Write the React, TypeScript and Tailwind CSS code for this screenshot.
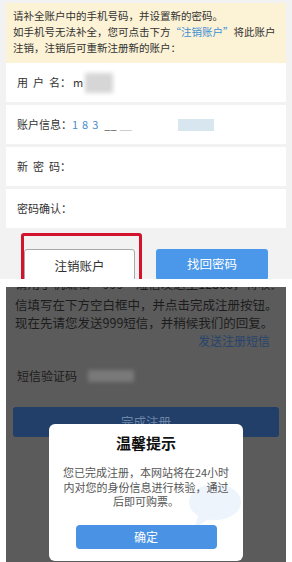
import React from "react";

const rowCls = "mx-[6px] h-[39px] bg-white flex items-center pl-[11px] text-[11px] text-[#333]";

export default function App() {
  return (
    <div className="w-[292px] h-[562px] overflow-hidden bg-white font-['Noto_Sans_CJK_SC','Noto_Sans',sans-serif]">
      {/* top: account form */}
      <div className="h-[279px] overflow-hidden bg-[#f2f2f2] pt-[3px]">
        <div className="mx-[6px] h-[60px] bg-[#fcf2d5] px-[7px] pt-[5px] text-[10.5px] leading-[16px] text-[#333]">
          <p>请补全账户中的手机号码，并设置新的密码。</p>
          <p className="whitespace-nowrap">
            如手机号无法补全，您可点击下方<span className="text-[#3d8fd8]">“注销账户”</span>将此账户
          </p>
          <p>注销，注销后可重新注册新的账户：</p>
        </div>

        <div className="flex flex-col gap-[3px]">
          <div className={rowCls}>
            <span className="tracking-[5px]">用户</span>
            <span>名：</span>
            <span className="ml-[2px]">m</span>
            <span className="ml-[2px] h-[20px] w-[28px] bg-[#d6d6d6] blur-[2px]" />
          </div>
          <div className={rowCls}>
            <span>账户信息：</span>
            <span className="text-[#4a8cc9] tracking-[4px]">183</span>
            <span className="ml-[2px] text-[#555]">__</span>
            <span className="ml-[3px] text-[#bbb]">__</span>
            <span className="ml-[46px] h-[12px] w-[36px] bg-[#d8e6f0]" />
          </div>
          <div className={rowCls}>
            <span className="tracking-[5px]">新密</span>
            <span>码：</span>
          </div>
          <div className={rowCls}>
            <span>密码确认：</span>
          </div>
        </div>

        <div className="mt-[5px] flex items-start">
          <div className="ml-[21px] w-[121px] rounded-[3px] border-[3px] border-[#d3122c] pt-[13px] pr-[4px]">
            <button className="h-[34px] w-full rounded-[3px] border border-[#a9a9a9] bg-white text-[12.5px] text-[#333]">
              注销账户
            </button>
          </div>
          <button className="ml-[14px] mt-[16px] h-[31px] w-[112px] rounded-[3px] bg-[#4b98ea] text-[12.5px] text-white">
            找回密码
          </button>
        </div>
      </div>

      {/* bottom: sms registration with dialog */}
      <div className="mt-[8px] relative mx-[6px] h-[275px] overflow-hidden bg-[#5b5b5b]">
        <div className="pl-[9px] pr-[12px] text-[12.5px] leading-[17.5px] text-[#1c1c1c] whitespace-nowrap">
          <div className="h-[9px] overflow-hidden">
            <p className="mt-[-12px]">请用手机编辑“999”短信发送至12306，将收到的短</p>
          </div>
          <p>信填写在下方空白框中，并点击完成注册按钮。</p>
          <p>现在先请您发送999短信，并稍候我们的回复。</p>
        </div>
        <p className="pr-[16px] text-right text-[12px] leading-[20px] text-[#26446e]">发送注册短信</p>
        <div className="mt-[13px] flex h-[24px] items-center pl-[11px] text-[12px] text-[#1c1c1c]">
          <span>短信验证码</span>
          <span className="ml-[11px] h-[12px] w-[46px] bg-[#7a7a7a] blur-[2px]" />
        </div>
        <div className="mx-[7px] mt-[19px] flex h-[30px] items-center justify-center rounded-[3px] bg-[#213f69] text-[12.5px] text-[#6e85a6]">
          完成注册
        </div>

        <div className="absolute left-[43px] top-[137px] h-[137px] w-[194px] overflow-hidden rounded-[6px] bg-white">
          <svg className="absolute left-[138px] top-[56px]" width="56" height="50" viewBox="0 0 56 50">
            <ellipse cx="28" cy="22" rx="26" ry="18" fill="#eef4fb" />
            <path d="M12 34 L7 48 L24 38 Z" fill="#eef4fb" />
          </svg>
          <div className="relative">
            <p className="pt-[9px] text-center text-[15px] font-bold leading-[20px] text-[#111]">温馨提示</p>
            <div className="mt-[12px] text-center text-[11px] leading-[14.5px] text-[#555]">
              <p>您已完成注册，本网站将在24小时</p>
              <p>内对您的身份信息进行核验，通过</p>
              <p>后即可购票。</p>
            </div>
            <button className="mx-auto mt-[16px] flex h-[24px] w-[141px] items-center justify-center rounded-[4px] bg-[#4a92e4] text-[12px] text-white">
              确定
            </button>
          </div>
        </div>
      </div>
    </div>
  );
}
